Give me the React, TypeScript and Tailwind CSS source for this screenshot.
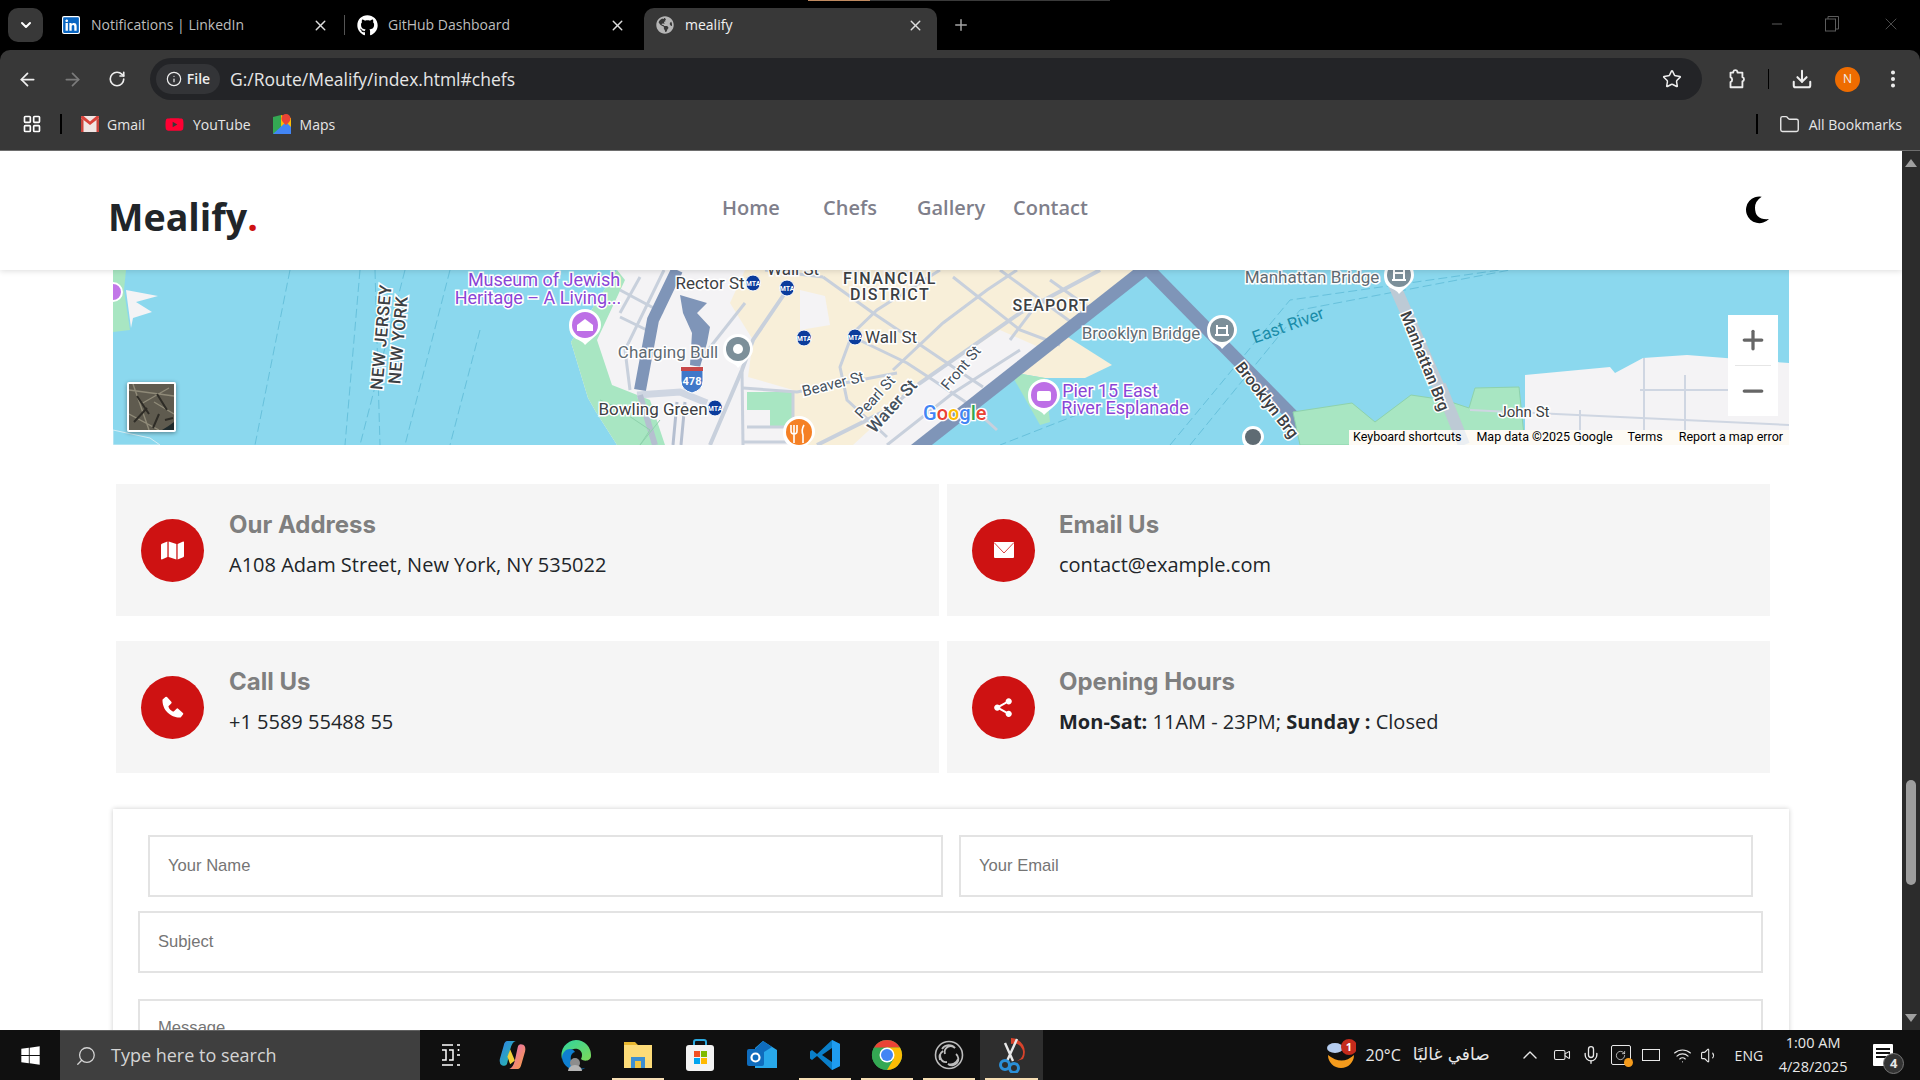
import React from "react";
import {
  ArrowLeft,
  ArrowRight,
  ChevronDown,
  ChevronUp,
  Download,
  Folder,
  Info,
  LayoutGrid,
  Mic,
  Minus,
  MoreVertical,
  Plus,
  RotateCw,
  Search,
  Star,
  Video,
  Volume1,
  Wifi,
  X,
} from "lucide-react";
import { FaGithub, FaGlobeAmericas, FaLinkedin, FaMap, FaWindows, FaYoutube } from "react-icons/fa";
import { BiSolidPhone, BiSolidShareAlt } from "react-icons/bi";

const MapLabel = ({
  x,
  y,
  children,
  size = 16,
  color = "#3c4043",
  rotate = 0,
  weight = 400,
  spacing = 0,
}: {
  x: number;
  y: number;
  children: React.ReactNode;
  size?: number;
  color?: string;
  rotate?: number;
  weight?: number;
  spacing?: number;
}) => (
  <text
    x={x}
    y={y}
    textAnchor="middle"
    dominantBaseline="central"
    fontFamily="Roboto, sans-serif"
    fontSize={size}
    fontWeight={weight}
    letterSpacing={spacing}
    fill={color}
    stroke="#fff"
    strokeWidth={3}
    paintOrder="stroke"
    transform={rotate ? `rotate(${rotate} ${x} ${y})` : undefined}
  >
    {children}
  </text>
);

const Metro = ({ x, y }: { x: number; y: number }) => (
  <g>
    <ellipse cx={x} cy={y} rx={7.5} ry={8} fill="#0b3c9c" stroke="#fff" strokeWidth={1} />
    <text x={x} y={y + 2.5} textAnchor="middle" fontFamily="Roboto, sans-serif" fontSize={7} fontWeight={700} fill="#fff">
      MTA
    </text>
  </g>
);

const Pin = ({ x, y, r = 13, color, children }: { x: number; y: number; r?: number; color: string; children?: React.ReactNode }) => (
  <g>
    <path
      d={`M${x - r - 3} ${y} a${r + 3} ${r + 3} 0 0 1 ${2 * r + 6} 0 c0 ${r * 0.7} -${r * 0.7} ${r} -${r + 3} ${r + 7} c-${r * 0.3} -7 -${r + 3} -${r * 0.3} -${r + 3} -${r + 7} z`}
      fill="#fff"
    />
    <circle cx={x} cy={y} r={r} fill={color} />
    {children}
  </g>
);

const NYMap = () => (
  <svg viewBox="113 270 1676 175" className="block w-full h-full" preserveAspectRatio="none">
    <rect x="113" y="270" width="1676" height="175" fill="#8bd8ee" />
    {/* ferry routes */}
    <g stroke="#5fbcd8" strokeWidth="1" fill="none" strokeDasharray="9 4" opacity="0.8">
      <path d="M290 270 L255 445" />
      <path d="M360 270 L345 445" />
      <path d="M375 270 L380 445" />
      <path d="M405 270 L360 445" />
      <path d="M450 270 L405 445" />
      <path d="M480 330 L450 445" />
      <path d="M1170 445 L1290 300 L1500 270" />
      <path d="M1190 445 L1300 310 L1510 270" />
      <path d="M1115 400 L1000 445" />
    </g>
    <path d="M113 270 H126 L124 290 L130 330 L113 332 Z" fill="#a8e6c2" />
    <path d="M126 290 L158 296 L136 302 L152 312 L133 318 L131 328 Z" fill="#f4f3f5" />
    <path d="M113 430 L150 438 L160 445 H113 Z" fill="#8bd8ee" stroke="#d5eef5" />
    {/* manhattan */}
    <path d="M617 270 L571 342 L588 398 L596 412 L617 445 H925 L1000 378 L1147 270 Z" fill="#f4f3f5" />
    <path d="M617 270 L571 342 L588 398 L596 412 L617 445 H665 L650 400 L612 385 L597 340 L625 280 Z" fill="#a8e6c2" />
    <path d="M745 270 L730 303 L753 340 L748 377 L793 390 V445 H853 L920 383 L1000 330 L1041 348 L1147 270 Z" fill="#f8efd9" />
    <path d="M800 290 L825 296 L830 325 L800 330 Z" fill="#f4f3f5" />
    <path d="M747 392 H793 V427 H770 V410 H747 Z" fill="#a8e6c2" />
    <path d="M1060 332 L1112 365 L1085 378 L1045 378 L1010 372 Z" fill="#f8efd9" />
    <path d="M1010 372 L1045 378 L1050 422 L1040 425 Z" fill="#a8e6c2" />
    {/* streets */}
    <g stroke="#c8d0dc" strokeWidth="3" fill="none">
      <path d="M787 290 L753 340 L742 370 L710 445" strokeWidth="4" />
      <path d="M742 370 L743 445" />
      <path d="M743 388 L797 392 L897 373" />
      <path d="M793 392 V427 H747" />
      <path d="M743 442 H793" />
      <path d="M817 445 L887 410 L920 383 L1020 313 L1100 270" strokeWidth="4" />
      <path d="M887 445 L953 393 L1020 350" />
      <path d="M850 340 L840 367 L847 400 L887 437" />
      <path d="M853 337 L907 363 L933 380 L967 403 L997 430" />
      <path d="M823 277 L873 313 L953 367 L983 387" />
      <path d="M853 333 L877 310 L940 270" />
      <path d="M893 370 L943 323 L987 290 L1017 270" />
      <path d="M953 277 L1020 330 L1060 345" />
      <path d="M765 270 L823 277" />
      <path d="M620 290 L663 313" />
      <path d="M620 317 L653 333" />
      <path d="M640 277 L620 313" />
      <path d="M664 270 L625 350 L630 390" />
      <path d="M1050 280 L1095 312" />
      <path d="M1000 270 L1075 325" />
      <path d="M1040 300 L1010 340" />
      <path d="M700 360 L745 303" />
    </g>
    {/* highways */}
    <g fill="none" stroke="#7f95b8">
      <path d="M677 270 L653 320 L640 390" strokeWidth="12" />
      <path d="M915 450 L1150 265" strokeWidth="13" />
      <path d="M1147 268 L1326 450" strokeWidth="13" />
    </g>
    <path d="M680 295 L707 303 L697 313 L710 327 L707 343 L700 367 L690 365 L692 333 L683 313 Z" fill="#7f95b8" />
    <path d="M637 395 L680 392 L707 403" stroke="#cfd6e2" strokeWidth="7" fill="none" />
    <path d="M640 395 L655 445" stroke="#b5bfd0" strokeWidth="6" fill="none" />
    <path d="M677 402 L673 445 M685 402 L681 445" stroke="#b5bfd0" strokeWidth="3" fill="none" />
    <g stroke="#8ed2ac" strokeWidth="1" fill="none">
      <path d="M620 410 L650 430 L640 445 M600 400 L635 415 M660 420 L640 445" />
    </g>
    <path d="M1393 282 L1464 445" stroke="#bdcad5" strokeWidth="12" fill="none" />
    {/* brooklyn */}
    <path d="M1525 375 L1610 367 L1615 373 L1643 358 L1687 355 L1789 363 V445 H1525 Z" fill="#f4f3f5" />
    <path d="M1293 412 L1352 403 L1375 422 L1411 395 L1445 400 L1469 408 L1475 388 L1519 387 L1525 445 H1300 Z" fill="#a8e6c2" stroke="#8ed2ac" />
    <path d="M1349 430 H1789 V445 H1349 Z" fill="#f8efd9" />
    <path d="M1464 445 L1440 385" stroke="#bdcad5" strokeWidth="12" fill="none" />
    <g stroke="#cfd6e2" strokeWidth="2" fill="none">
      <path d="M1470 410 L1789 425" />
      <path d="M1640 390 H1730" />
      <path d="M1644 358 V430" />
      <path d="M1685 375 V430" />
      <path d="M1580 410 V445" />
    </g>

    <circle cx="113" cy="292" r="9" fill="#c277e8" stroke="#fff" strokeWidth="2" />
    <MapLabel x={544} y={279} size={18} color="#8a45d6">Museum of Jewish</MapLabel>
    <MapLabel x={538} y={297} size={18} color="#8a45d6">Heritage – A Living...</MapLabel>
    <Pin x={585} y={325} color="#bd6fe6">
      <path d="M577 325 L585 319 L593 325 V331 H577 Z" fill="#fff" />
    </Pin>
    <MapLabel x={381} y={337} size={17} weight={500} rotate={-85} spacing={0.5}>NEW JERSEY</MapLabel>
    <MapLabel x={398} y={340} size={17} weight={500} rotate={-85} spacing={0.5}>NEW YORK</MapLabel>
    <MapLabel x={710} y={283} size={17}>Rector St</MapLabel>
    <MapLabel x={793} y={269} size={17}>Wall St</MapLabel>
    <Metro x={753} y={283} />
    <Metro x={787} y={288} />
    <Metro x={804} y={338} />
    <Metro x={855} y={337} />
    <Metro x={715} y={408} />
    <MapLabel x={890} y={278} size={16} weight={500} spacing={1.4}>FINANCIAL</MapLabel>
    <MapLabel x={890} y={294} size={16} weight={500} spacing={1.4}>DISTRICT</MapLabel>
    <MapLabel x={891} y={337} size={17}>Wall St</MapLabel>
    <MapLabel x={668} y={352} size={17} color="#5f6b73">Charging Bull</MapLabel>
    <Pin x={738} y={349} r={12} color="#7c8f99">
      <circle cx="738" cy="349" r="5" fill="#fff" />
    </Pin>
    <g>
      <path d="M681 367 H703 V381 Q703 390 692 393 Q681 390 681 381 Z" fill="#3f78c9" stroke="#fff" />
      <rect x="681" y="367" width="22" height="4" fill="#c8494a" />
      <text x="692" y="385" textAnchor="middle" fontFamily="Roboto, sans-serif" fontSize="11" fontWeight={700} fill="#fff">478</text>
    </g>
    <MapLabel x={653} y={409} size={17}>Bowling Green</MapLabel>
    <MapLabel x={833} y={384} size={15} color="#44505c" rotate={-14}>Beaver St</MapLabel>
    <MapLabel x={875} y={397} size={15} color="#44505c" rotate={-48}>Pearl St</MapLabel>
    <MapLabel x={892} y={406} size={17} color="#44505c" weight={500} rotate={-48}>Water St</MapLabel>
    <MapLabel x={961} y={368} size={15} color="#44505c" rotate={-50}>Front St</MapLabel>
    <text x="923" y="420" fontFamily="Roboto, sans-serif" fontSize="20" fontWeight={500} stroke="#fff" strokeWidth="2.5" paintOrder="stroke">
      <tspan fill="#4285f4">G</tspan>
      <tspan fill="#ea4335">o</tspan>
      <tspan fill="#fbbc05">o</tspan>
      <tspan fill="#4285f4">g</tspan>
      <tspan fill="#34a853">l</tspan>
      <tspan fill="#ea4335">e</tspan>
    </text>
    <Pin x={799} y={432} color="#f58024">
      <path d="M791 425 V431 Q791 434 794 434 V443 M794 425 V434 M794 434 Q797 434 797 431 V425 M804 425 Q801 430 803 435 V443" stroke="#fff" strokeWidth="1.6" fill="none" />
    </Pin>
    <MapLabel x={1051} y={305} size={16} weight={500} spacing={1}>SEAPORT</MapLabel>
    <MapLabel x={1141} y={333} size={17} color="#5f6b73">Brooklyn Bridge</MapLabel>
    <Pin x={1222} y={330} r={12} color="#7c8f99">
      <path d="M1215 335 H1229 M1217 325 V335 M1227 325 V335 M1217 328 H1227" stroke="#fff" strokeWidth="2" />
    </Pin>
    <MapLabel x={1312} y={277} size={17} color="#5f6b73">Manhattan Bridge</MapLabel>
    <Pin x={1399} y={275} r={12} color="#7c8f99">
      <path d="M1392 280 H1406 M1394 270 V280 M1404 270 V280 M1394 273 H1404" stroke="#fff" strokeWidth="2" />
    </Pin>
    <text x="1288" y="325" textAnchor="middle" dominantBaseline="central" fontFamily="Roboto, sans-serif" fontSize="17" fill="#1a8ca8" transform="rotate(-20 1288 325)">
      East River
    </text>
    <MapLabel x={1425} y={361} size={16} rotate={68} weight={500}>Manhattan Brg</MapLabel>
    <MapLabel x={1267} y={400} size={16} rotate={52} weight={500}>Brooklyn Brg</MapLabel>
    <Pin x={1044} y={395} color="#bd6fe6">
      <rect x="1037" y="391" width="14" height="10" rx="2" fill="#fff" />
    </Pin>
    <MapLabel x={1110} y={390} size={18} color="#8a45d6">Pier 15 East</MapLabel>
    <MapLabel x={1125} y={407} size={18} color="#8a45d6">River Esplanade</MapLabel>
    <MapLabel x={1524} y={412} size={15}>John St</MapLabel>
    <Pin x={1253} y={437} r={8} color="#5f6b73" />
  </svg>
);

const SatelliteThumb = () => (
  <svg viewBox="0 0 45 46" className="block w-full h-full">
    <rect width="45" height="46" fill="#5f5b4f" />
    <g stroke="#8f8a78" strokeWidth="1.4">
      <path d="M0 6 L45 12 M4 0 L20 46 M12 20 L40 4 M0 30 L30 46 M25 18 L45 30" />
    </g>
    <g stroke="#2e2c26" strokeWidth="2">
      <path d="M8 12 L20 30 M28 10 L38 26 M5 38 L18 24 M30 30 L24 44 M36 36 L44 34" />
    </g>
    <path d="M33 46 Q40 42 45 38 V46 Z" fill="#1f2a2c" />
  </svg>
);

const MapControls = () => (
  <>
    <div className="absolute left-[14px] top-[112px] w-[49px] h-[50px] border-2 border-white rounded-[2px] shadow-[0_1px_4px_rgba(0,0,0,0.4)] overflow-hidden">
      <SatelliteThumb />
    </div>
    <div className="absolute left-[1615px] top-[45px] w-[50px] h-[101px] bg-white flex flex-col items-center text-[#666]">
      <div className="h-[50px] flex items-center justify-center">
        <Plus size={30} strokeWidth={2.6} />
      </div>
      <div className="w-[36px] h-px bg-[#e6e6e6]" />
      <div className="h-[50px] flex items-center justify-center">
        <Minus size={30} strokeWidth={2.6} />
      </div>
    </div>
    <div className="absolute right-0 bottom-0 h-[15px] w-[440px] bg-white/70 flex items-center font-['Roboto',sans-serif] text-[12.5px] leading-none text-black">
      <span className="ml-[4px]">Keyboard shortcuts</span>
      <span className="ml-[15px]">Map data ©2025 Google</span>
      <span className="ml-[15px]">Terms</span>
      <span className="ml-[16px]">Report a map error</span>
    </div>
  </>
);

const EnvelopeIcon = () => (
  <svg viewBox="0 0 20 16" className="w-[20px] h-[16px]">
    <rect width="20" height="16" rx="1" fill="#fff" />
    <path d="M0.5 1 L10 11 L19.5 1" fill="none" stroke="#ce1212" strokeWidth="0.8" />
  </svg>
);

const InfoCard = ({
  icon,
  title,
  gap,
  children,
}: {
  icon: React.ReactNode;
  title: string;
  gap: string;
  children: React.ReactNode;
}) => (
  <div className="h-[132px] bg-[#f5f5f5] flex items-center pl-[25px]">
    <div className="w-[63px] h-[63px] rounded-full bg-[#ce1212] text-white flex items-center justify-center shrink-0">
      {icon}
    </div>
    <div className={`${gap} -mt-[11px]`}>
      <h3 className="font-['Inter',sans-serif] font-bold text-[24px] leading-[29px] text-[#7f7f7f] mb-[11px]">{title}</h3>
      <p className="text-[20px] leading-[30px] text-[#212529]">{children}</p>
    </div>
  </div>
);

const fieldClass =
  "block h-[62px] border-2 border-[#e3e3e3] bg-white px-[18px] font-['Liberation_Sans',sans-serif] text-[16.6px] text-[#757575] placeholder:text-[#757575] outline-none";

const Tab = ({
  icon,
  title,
  active,
  className,
}: {
  icon: React.ReactNode;
  title: string;
  active?: boolean;
  className: string;
}) => (
  <div className={`${className} h-[42px] pb-[8px] flex items-center ${active ? "bg-[#383838] rounded-t-[10px] text-[#f1f1f1]" : "text-[#bdbdbd]"}`}>
    {icon}
    <span className="text-[14px] leading-none whitespace-nowrap">{title}</span>
    <X size={17} strokeWidth={2} className="ml-auto text-[#dddddd]" />
  </div>
);

const GmailIcon = () => (
  <svg viewBox="0 0 18 16" className="w-[18px] h-[16px]">
    <rect width="18" height="16" rx="1.5" fill="#f1e5e3" />
    <path d="M0 2 L9 9 L18 2 V0.8 Q18 0 17 0 H15.5 L9 5.5 L2.5 0 H1 Q0 0 0 0.8 Z" fill="#d9423a" />
    <path d="M0 2 V16 H2.5 V4 Z M18 2 V16 H15.5 V4 Z" fill="#c9443c" />
  </svg>
);

const MapsIcon = () => (
  <svg viewBox="0 0 18 20" className="w-[18px] h-[20px]">
    <path d="M0 3 L8 1 V19 L0 20 Z" fill="#34a853" />
    <path d="M8 1 L18 4 V19 L8 19 Z" fill="#fbbc05" />
    <path d="M0 20 L13 8 L18 13 V20 Z" fill="#4285f4" />
    <path d="M13 0 a4.5 4.5 0 0 1 4.5 4.5 C17.5 8 13 11 13 11 S8.5 8 8.5 4.5 A4.5 4.5 0 0 1 13 0Z" fill="#ea4335" />
  </svg>
);

const ExtensionIcon = () => (
  <svg viewBox="0 0 24 24" className="w-[22px] h-[22px] ml-[23px]" fill="none" stroke="#ededed" strokeWidth="2" strokeLinejoin="round">
    <path d="M9 4 a2.4 2.4 0 0 1 4.6 0 V5 H19 V10 a2.4 2.4 0 0 1 0 4.6 V21 H6 V15.5 a3 3 0 0 0 0 -5.5 V5 H9 Z" />
  </svg>
);

const MoonIcon = () => (
  <svg viewBox="0 0 135 120" className="w-[45px] h-[40px]">
    <path d="M80 17 A40 40 0 1 0 102 84 Q60 88 60 50 Q60 30 80 17 Z" fill="#000" />
  </svg>
);

const ChromeIcon = () => (
  <svg viewBox="0 0 32 32" className="w-[32px] h-[32px]">
    <circle cx="16" cy="16" r="15" fill="#34a853" />
    <path d="M16 1 A15 15 0 0 1 29 8.5 L16 8.5 L3 8.5 A15 15 0 0 1 16 1Z" fill="#ea4335" />
    <path d="M3 8.5 L9.5 20 L16 31 A15 15 0 0 1 3 8.5Z" fill="#34a853" />
    <path d="M29 8.5 A15 15 0 0 1 16 31 L22.5 20 L16 8.5Z" fill="#fbbc05" />
    <circle cx="16" cy="16" r="7.5" fill="#fff" />
    <circle cx="16" cy="16" r="6" fill="#4285f4" />
  </svg>
);

const EdgeIcon = () => (
  <svg viewBox="0 0 32 32" className="w-[32px] h-[32px]">
    <defs>
      <linearGradient id="edgeFill" x1="0" y1="0" x2="1" y2="1">
        <stop offset="0" stopColor="#2dd4a0" />
        <stop offset="1" stopColor="#7ed957" />
      </linearGradient>
    </defs>
    <path d="M16 1 A15 15 0 0 1 31 17 C31 22 24 23 21 20 C24 14 20 9 14 10 C7 11 3 17 2 20 A15 15 0 0 1 16 1Z" fill="url(#edgeFill)" />
    <path d="M2 19 C2 10 12 7 15 13 C10 14 9 22 14 27 C18 31 24 30 26 28 C20 34 4 32 2 19Z" fill="#0f7fd0" />
    <circle cx="15" cy="24" r="5" fill="#8d8d8d" />
    <path d="M8 32 a7 6 0 0 1 14 0Z" fill="#b5b5b5" />
  </svg>
);

const TaskIcons: { key: string; node: React.ReactNode; under?: boolean; hot?: boolean }[] = [
  {
    key: "view",
    node: (
      <svg viewBox="0 0 20 22" className="w-[20px] h-[22px]" fill="none" stroke="#fff" strokeWidth="1.5">
        <path d="M1 1 H12 M1 21 H12 M1 6 H5 V16 H1 M8 6 H12 V16 H8 M16 1 H19 M16 11 H19 M16 21 H19 M17.5 5 V7" />
      </svg>
    ),
  },
  {
    key: "copilot",
    node: (
      <svg viewBox="0 0 30 32" className="w-[28px] h-[30px]">
        <defs>
          <linearGradient id="copA" x1="0" y1="0" x2="1" y2="1">
            <stop offset="0" stopColor="#2f7ee8" />
            <stop offset="1" stopColor="#27c4a0" />
          </linearGradient>
          <linearGradient id="copB" x1="0" y1="0" x2="1" y2="1">
            <stop offset="0" stopColor="#e766c8" />
            <stop offset="1" stopColor="#f7a03c" />
          </linearGradient>
        </defs>
        <path d="M9 1 H18 Q14 2 12 10 L9 24 Q8 29 3 27 Q0 25 1 20 L5 6 Q6 1 9 1Z" fill="url(#copA)" />
        <path d="M20 31 H11 Q15 30 17 22 L20 8 Q21 3 26 5 Q29 7 28 12 L24 26 Q23 31 20 31Z" fill="url(#copB)" />
        <path d="M12 10 L17 22 L12 26 L9 18Z" fill="#f3d13b" />
      </svg>
    ),
  },
  { key: "edge", node: <EdgeIcon /> },
  {
    key: "files",
    under: true,
    node: (
      <svg viewBox="0 0 28 30" className="w-[28px] h-[30px]">
        <path d="M0 2 H11 L14 5 H28 V28 H0 Z" fill="#e8b730" />
        <rect y="5" width="28" height="23" fill="#fcdb78" />
        <path d="M7 28 V17 H21 V28 H17 V21 H11 V28 Z" fill="#3d8fd1" />
        <rect x="11" y="21" width="6" height="7" fill="#f0c541" />
      </svg>
    ),
  },
  {
    key: "store",
    node: (
      <svg viewBox="0 0 28 32" className="w-[28px] h-[32px]">
        <path d="M8 8 V3 Q8 1 10 1 H18 Q20 1 20 3 V8" fill="none" stroke="#2ba8de" strokeWidth="2" />
        <rect y="6" width="28" height="26" rx="3" fill="#f3f3f3" />
        <rect x="8" y="12" width="6" height="6" fill="#f25022" />
        <rect x="15" y="12" width="6" height="6" fill="#7fba00" />
        <rect x="8" y="19" width="6" height="6" fill="#00a4ef" />
        <rect x="15" y="19" width="6" height="6" fill="#ffb900" />
      </svg>
    ),
  },
  {
    key: "outlook",
    node: (
      <svg viewBox="0 0 30 30" className="w-[30px] h-[30px]">
        <path d="M16 1 L30 10 V28 H8 V8 Z" fill="#28a8ea" />
        <path d="M16 1 L25 7 L14 14 L8 9 Z" fill="#0f6cbd" />
        <rect x="0" y="9" width="17" height="17" rx="2" fill="#0f6cbd" />
        <circle cx="8.5" cy="17.5" r="4" fill="none" stroke="#fff" strokeWidth="2.2" />
      </svg>
    ),
  },
  {
    key: "code",
    under: true,
    node: (
      <svg viewBox="0 0 30 32" className="w-[30px] h-[32px]">
        <path d="M22 1 L30 5 V27 L22 31 L7 17 L2 21 L0 19.5 V12.5 L2 11 L7 15 Z" fill="#0a7fc9" />
        <path d="M22 9 L12 16 L22 23 Z" fill="#101010" />
        <path d="M22 1 L30 5 V27 L22 31 Z" fill="#1f9cf0" />
      </svg>
    ),
  },
  { key: "chrome", under: true, node: <ChromeIcon /> },
  {
    key: "obs",
    under: true,
    node: (
      <svg viewBox="0 0 30 30" className="w-[30px] h-[30px]" fill="none" stroke="#bdbdbd">
        <circle cx="15" cy="15" r="13.5" strokeWidth="1.6" />
        <path d="M8 9 A8 8 0 0 1 21 8 A6 6 0 0 0 11 14 M24 19 A8 8 0 0 1 14 24 A6 6 0 0 0 22 14 M6 20 A8 8 0 0 1 9 11 A6 6 0 0 0 13 22" strokeWidth="1.8" />
      </svg>
    ),
  },
  {
    key: "snip",
    under: true,
    hot: true,
    node: (
      <svg viewBox="0 0 28 36" className="w-[28px] h-[36px]" fill="none">
        <path d="M14 1 A14 14 0 0 1 26 22 L20 24 A9 9 0 0 0 14 7 Z" fill="#d8432b" />
        <path d="M10 24 L20 2 M16 24 L8 6" stroke="#e8e8e8" strokeWidth="2.4" />
        <circle cx="8" cy="28" r="4.5" stroke="#2a8fd8" strokeWidth="3" />
        <circle cx="17" cy="31" r="4.5" stroke="#2a8fd8" strokeWidth="3" />
      </svg>
    ),
  },
];

const BrowserChrome = () => (
  <header className="relative bg-black font-['Open_Sans',sans-serif]">
    <div className="absolute top-0 left-[808px] w-[62px] h-px bg-[#c08a60]" />
    <div className="absolute top-0 left-[870px] w-[240px] h-px bg-[#3a3a3a]" />
    <div className="h-[50px] flex items-end">
      <div className="w-[35px] h-[34px] ml-[8px] mb-[8px] rounded-[10px] bg-[#383838] flex items-center justify-center text-white">
        <ChevronDown size={16} strokeWidth={3} />
      </div>
      <Tab className="w-[267px] ml-[19px]" title="Notifications | LinkedIn" icon={<FaLinkedin className="text-[#0a66c2] bg-white rounded-[2px] mr-[11px]" size={18} />} />
      <div className="w-px h-[20px] bg-[#555] mb-[15px] ml-[15px]" />
      <Tab className="w-[269px] ml-[12px]" title="GitHub Dashboard" icon={<FaGithub className="text-white mr-[10px]" size={21} />} />
      <Tab active className="w-[293px] ml-[18px] pl-[12px] pr-[13px]" title="mealify" icon={<FaGlobeAmericas className="text-[#b5b5b5] mr-[11px]" size={18} />} />
      <Plus size={18} strokeWidth={2} className="text-[#a5a5a5] ml-[15px] mb-[16px]" />
      <div className="ml-auto flex items-center mb-[16px] text-[#5c5c5c]">
        <Minus size={16} strokeWidth={1.5} className="mr-[40px]" />
        <svg viewBox="0 0 14 16" className="w-[14px] h-[16px] mr-[42px]" fill="none" stroke="currentColor">
          <rect x="0.5" y="3" width="10" height="12" />
          <path d="M3 3 V0.5 H13.5 V13 H10.5" />
        </svg>
        <X size={20} strokeWidth={1} className="mr-[19px]" />
      </div>
    </div>
    <div className="h-[50px] bg-[#383838] rounded-t-[10px] flex items-end text-[#eeeeee]">
      <div className="h-[42px] flex items-center">
        <ArrowLeft size={21} strokeWidth={2} className="ml-[17px]" />
        <ArrowRight size={21} strokeWidth={2} className="ml-[24px] text-[#7b7b7b]" />
        <RotateCw size={18} strokeWidth={2.2} className="ml-[25px]" />
      </div>
      <div className="ml-[24px] w-[1552px] h-[42px] rounded-full bg-[#232427] flex items-center pl-[6px]">
        <div className="w-[64px] h-[30px] rounded-full bg-[#333437] flex items-center justify-center gap-[5px]">
          <Info size={16} strokeWidth={1.8} />
          <span className="text-[14px] font-semibold leading-none">File</span>
        </div>
        <span className="ml-[10px] text-[17.5px] text-[#e6e6e6]">G:/Route/Mealify/index.html#chefs</span>
        <Star size={20} strokeWidth={1.8} className="ml-auto mr-[20px]" />
      </div>
      <div className="h-[42px] flex items-center flex-1">
        <ExtensionIcon />
        <div className="w-px h-[20px] bg-black ml-[21px]" />
        <Download size={22} strokeWidth={2.2} className="ml-[22px]" />
        <div className="w-[25px] h-[25px] rounded-full bg-[#ee6c00] text-[12px] flex items-center justify-center ml-[22px]">N</div>
        <MoreVertical size={22} strokeWidth={2.4} className="ml-[22px]" />
      </div>
    </div>
    <div className="h-[51px] pb-[2px] bg-[#383838] border-b border-[#6e6e6e] flex items-center text-[14px] text-[#e6e6e6]">
      <LayoutGrid size={20} strokeWidth={2} className="ml-[22px] text-white" />
      <div className="w-0.5 h-[20px] bg-black ml-[18px]" />
      <span className="ml-[19px]"><GmailIcon /></span>
      <span className="ml-[8px]">Gmail</span>
      <FaYoutube className="ml-[20px] text-[#ff0033]" size={19} />
      <span className="ml-[9px]">YouTube</span>
      <span className="ml-[22px]"><MapsIcon /></span>
      <span className="ml-[9px]">Maps</span>
      <div className="w-0.5 h-[20px] bg-black ml-auto" />
      <Folder size={21} strokeWidth={1.6} className="ml-[21px]" />
      <span className="ml-[9px] mr-[18px]">All Bookmarks</span>
    </div>
  </header>
);

const Taskbar = () => (
  <footer className="h-[50px] shrink-0 bg-[#101010] flex items-stretch text-white font-['Open_Sans',sans-serif]">
    <div className="w-[60px] flex items-center justify-center">
      <FaWindows size={21} />
    </div>
    <div className="w-[360px] bg-[#3f3f3f] border-t border-[#606060] flex items-center text-[#d4d4d4]">
      <Search size={22} strokeWidth={1.4} className="ml-[15px] -scale-x-100" />
      <span className="ml-[14px] text-[18px]">Type here to search</span>
    </div>
    {TaskIcons.map((t) => (
      <div key={t.key} className={`w-[62.25px] relative flex items-center justify-center ${t.hot ? "bg-[#2e2e2e]" : ""}`}>
        {t.node}
        {t.under ? <div className="absolute bottom-0 left-[5px] right-[5px] h-[2px] bg-[#f6deb4]" /> : null}
      </div>
    ))}
    <div className="flex items-center flex-1 text-[#e8e8e8]">
      <svg viewBox="0 0 30 34" className="w-[30px] h-[34px] ml-[283px]">
        <path d="M2 17 A13 13 0 0 0 28 17 Q16 28 2 17Z" fill="#f59b1c" />
        <ellipse cx="9" cy="10" rx="8" ry="5" fill="#b5cdf0" />
        <circle cx="23" cy="9" r="8" fill="#c42b1c" />
        <text x="23" y="13" textAnchor="middle" fontSize="11" fontWeight={700} fill="#fff" fontFamily="Open Sans, sans-serif">1</text>
      </svg>
      <span className="ml-[10px] text-[16px]">20°C</span>
      <span className="ml-[12px] text-[17px] font-['DejaVu_Sans',sans-serif]" dir="rtl">صافي غالبًا</span>
      <ChevronUp size={24} strokeWidth={1.4} className="ml-[28px]" />
      <Video size={18} strokeWidth={1.4} className="ml-[11px]" />
      <Mic size={20} strokeWidth={1.6} className="ml-[10px]" />
      <div className="relative ml-[10px] w-[20px] h-[20px] border border-[#e8e8e8] rounded-[2px] flex items-center justify-center">
        <RotateCw size={11} strokeWidth={1.6} />
        <span className="absolute right-[-3px] bottom-[-3px] w-[9px] h-[9px] rounded-full bg-[#f59b1c]" />
      </div>
      <div className="ml-[11px] w-[18px] h-[12px] border border-[#e8e8e8]" />
      <Wifi size={19} strokeWidth={1.4} className="ml-[13px]" />
      <Volume1 size={19} strokeWidth={1.4} className="ml-[8px]" />
      <span className="ml-[16px] text-[14px]">ENG</span>
      <div className="ml-[10px] flex flex-col items-center text-[14.5px] leading-[24px] w-[80px]">
        <span>1:00 AM</span>
        <span>4/28/2025</span>
      </div>
      <div className="relative ml-[20px]">
        <div className="w-[20px] h-[22px] bg-white rounded-[1px] flex flex-col gap-[2px] p-[3px] pt-[4px]">
          <span className="h-0.5 bg-[#101010]" />
          <span className="h-0.5 bg-[#101010]" />
          <span className="h-0.5 bg-[#101010]" />
        </div>
        <span className="absolute left-[10px] top-[9px] w-[21px] h-[21px] rounded-full bg-[#333] border border-[#777] text-[13px] font-bold flex items-center justify-center">4</span>
      </div>
    </div>
  </footer>
);

const App = () => {
  return (
    <div className="w-[1920px] h-[1080px] overflow-hidden flex flex-col bg-white font-['Open_Sans',sans-serif]">
      <BrowserChrome />
      <div className="flex-1 min-h-0 flex">
        <main className="relative flex-1 min-w-0 overflow-hidden bg-white">
          <nav className="relative z-10 h-[119px] bg-white shadow-[0_1px_6px_rgba(0,0,0,0.14)] flex items-center">
            <a className="ml-[108px] w-[614px] text-[37.6px] leading-none font-bold text-[#212529] -mb-[13px]">
              Mealify<span className="text-[#ce1212]">.</span>
            </a>
            <div className="flex text-[20px] font-semibold text-[#7f7f8b] -mt-[6px]">
              <span className="w-[101px]">Home</span>
              <span className="w-[94px]">Chefs</span>
              <span className="w-[96px]">Gallery</span>
              <span>Contact</span>
            </div>
            <div className="ml-auto mr-[122px]">
              <MoonIcon />
            </div>
          </nav>

          <div className="relative ml-[113px] w-[1676px] h-[175px]">
            <NYMap />
            <MapControls />
          </div>

          <section className="ml-[116px] w-[1654px] mt-[39px] grid grid-cols-2 gap-x-[8px] gap-y-[25px]">
            <InfoCard icon={<FaMap size={23} />} title="Our Address" gap="ml-[25px]">
              A108 Adam Street, New York, NY 535022
            </InfoCard>
            <InfoCard icon={<EnvelopeIcon />} title="Email Us" gap="ml-[24px]">
              contact@example.com
            </InfoCard>
            <InfoCard icon={<BiSolidPhone size={28} />} title="Call Us" gap="ml-[25px]">
              +1 5589 55488 55
            </InfoCard>
            <InfoCard icon={<BiSolidShareAlt size={25} />} title="Opening Hours" gap="ml-[24px]">
              <strong className="font-bold">Mon-Sat:</strong> 11AM - 23PM; <strong className="font-bold">Sunday :</strong> Closed
            </InfoCard>
          </section>

          <form className="ml-[113px] w-[1676px] h-[400px] mt-[36px] bg-white pt-[26px] shadow-[0_0_5px_rgba(0,0,0,0.2)]">
            <div className="flex gap-[16px] pl-[35px]">
              <input className={`${fieldClass} w-[795px]`} placeholder="Your Name" />
              <input className={`${fieldClass} w-[794px]`} placeholder="Your Email" />
            </div>
            <input className={`${fieldClass} w-[1625px] ml-[25px] mt-[14px]`} placeholder="Subject" />
            <textarea className={`${fieldClass} w-[1625px] ml-[25px] mt-[26px] h-[200px] pt-[15px] resize-none`} placeholder="Message" />
          </form>
        </main>
        <aside className="w-[18px] shrink-0 bg-[#2c2c2c] flex flex-col items-center">
          <div className="mt-[8px] w-0 h-0 border-x-[6px] border-x-transparent border-b-[8px] border-b-[#a0a0a0]" />
          <div className="mt-[613px] w-[10px] h-[105px] rounded-full bg-[#9e9e9e]" />
          <div className="mt-auto mb-[8px] w-0 h-0 border-x-[6px] border-x-transparent border-t-[8px] border-t-[#a0a0a0]" />
        </aside>
      </div>
      <Taskbar />
    </div>
  );
};

export default App;
